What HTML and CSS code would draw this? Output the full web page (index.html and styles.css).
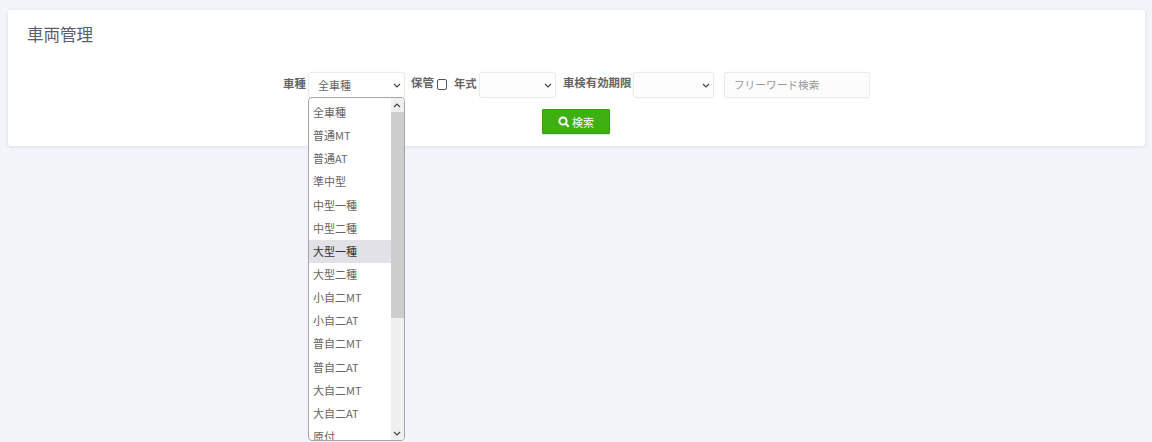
FILE: index.html
```html
<!DOCTYPE html>
<html lang="ja">
<head>
<meta charset="utf-8">
<title>車両管理</title>
<link rel="stylesheet" href="styles.css">
</head>
<body>
<main class="card">
  <h1 class="title">車両管理</h1>
  <form class="filters">
    <div class="row">
      <label class="label label-first">車種</label>
      <div class="select-wrap">
        <div class="select select-type"><span>全車種</span>
          <svg class="chev" viewBox="0 0 8 5"><path d="M1 1l3 3 3-3"/></svg>
        </div>
        <div class="menu">
          <ul class="options">
            <li>全車種</li>
            <li>普通MT</li>
            <li>普通AT</li>
            <li>準中型</li>
            <li>中型一種</li>
            <li>中型二種</li>
            <li class="active">大型一種</li>
            <li>大型二種</li>
            <li>小自二MT</li>
            <li>小自二AT</li>
            <li>普自二MT</li>
            <li>普自二AT</li>
            <li>大自二MT</li>
            <li>大自二AT</li>
            <li>原付</li>
          </ul>
          <div class="scrollbar">
            <div class="sb-btn"><svg class="sb-arrow" viewBox="0 0 8 5"><path d="M1 4l3-3 3 3"/></svg></div>
            <div class="sb-thumb"></div>
            <div class="sb-track"></div>
            <div class="sb-btn"><svg class="sb-arrow" viewBox="0 0 8 5"><path d="M1 1l3 3 3-3"/></svg></div>
          </div>
        </div>
      </div>
      <label class="label label-store">保管</label>
      <span class="check"></span>
      <label class="label label-year">年式</label>
      <div class="select select-year">
        <svg class="chev" viewBox="0 0 8 5"><path d="M1 1l3 3 3-3"/></svg>
      </div>
      <label class="label label-inspect">車検有効期限</label>
      <div class="select select-inspect">
        <svg class="chev" viewBox="0 0 8 5"><path d="M1 1l3 3 3-3"/></svg>
      </div>
      <div class="keyword">フリーワード検索</div>
    </div>
    <div class="actions">
      <button class="search" type="button">
        <svg class="search-icon" viewBox="0 0 12 12"><circle cx="5" cy="5" r="3.6"/><path d="M7.7 7.7l3.1 3.1"/></svg>
        検索
      </button>
    </div>
  </form>
</main>
</body>
</html>
```
FILE: styles.css
```css
* { box-sizing: border-box; }
html, body { height: 100%; }
body {
  margin: 0;
  padding: 10px 7px 0 8px;
  background: #f3f4f9;
  color: #666;
  font-family: "Noto Sans CJK JP", "Open Sans", sans-serif;
  font-size: 11px;
  overflow: hidden;
}
.card {
  height: 136px;
  background: #fff;
  border-radius: 3px;
  box-shadow: 0 1px 4px rgba(0, 0, 0, .09);
  padding: 14px 19px 0;
}
.title {
  margin: 0;
  font-size: 16.5px;
  font-weight: 400;
  line-height: 20px;
  color: #595d6e;
}
.filters { margin-top: 28px; }
.row {
  display: flex;
  align-items: flex-start;
  padding-left: 256px;
  height: 26px;
}
.label {
  font-size: 11.4px;
  font-weight: 700;
  line-height: 16px;
  color: #646464;
  white-space: nowrap;
}
.label-first { margin-top: 3px; margin-right: 2.2px; }
.label-store { margin: 2px 3.2px 0 6px; }
.label-year { margin: 3px 2.2px 0 7px; }
.label-inspect { margin: 2px 1.6px 0 7px; }
.select-wrap { position: relative; }
.select {
  display: flex;
  align-items: center;
  justify-content: space-between;
  height: 26px;
  padding: 0 3px 0 9px;
  background: #fff;
  border: 1px solid #ebebeb;
  border-radius: 3px;
  box-shadow: 0 0 2px rgba(0, 0, 0, .06);
  color: #666;
}
.select-type { width: 97px; }
.select-year { width: 77px; justify-content: flex-end; background: #fdfdfd; }
.select-inspect { width: 81px; justify-content: flex-end; background: #fdfdfd; }
.chev { width: 8px; height: 5px; margin-left: auto; }
.chev path, .sb-arrow path {
  fill: none;
  stroke: #444;
  stroke-width: 1.2;
}
.check {
  width: 10px;
  height: 11px;
  margin-top: 7px;
  border: 1px solid #555;
  border-radius: 2px;
  background: #fff;
}
.keyword {
  width: 146px;
  height: 26px;
  margin-left: 10px;
  padding-left: 9px;
  background: #fcfcfc;
  border: 1px solid #ebebeb;
  border-radius: 2px;
  box-shadow: 0 0 2px rgba(0, 0, 0, .05);
  font-size: 10.7px;
  line-height: 24px;
  color: #999;
}
.menu {
  position: absolute;
  top: 25px;
  left: 0;
  z-index: 2;
  display: flex;
  width: 97px;
  height: 344px;
  background: #fff;
  border: 1px solid #a4a4a4;
  border-radius: 4px;
  overflow: hidden;
}
.options {
  flex: 1;
  height: 100%;
  margin: 0;
  padding: 3px 0 0;
  list-style: none;
  overflow: hidden;
}
.options li {
  height: 23.15px;
  padding-left: 4px;
  line-height: 23px;
  color: #666;
  white-space: nowrap;
}
.options .active { background: #e1e1e7; color: #333; }
.scrollbar {
  display: flex;
  flex-direction: column;
  width: 13px;
  background: #f0f0f0;
}
.sb-btn {
  display: flex;
  align-items: center;
  justify-content: center;
  height: 14px;
  flex: none;
}
.sb-arrow { width: 8px; height: 5px; }
.sb-thumb { height: 206px; flex: none; background: #cdcdcd; }
.sb-track { flex: 1; }
.actions {
  display: flex;
  justify-content: center;
  margin-top: 11px;
  padding-right: 1px;
}
.search {
  display: flex;
  align-items: center;
  justify-content: center;
  gap: 2px;
  width: 68px;
  height: 25px;
  padding: 0;
  background: #3fb012;
  border: 1px solid #38a00f;
  border-radius: 1px;
  box-shadow: 0 1px 2px rgba(0, 0, 0, .12);
  color: #fff;
  font: inherit;
}
.search-icon { width: 12px; height: 12px; }
.search-icon circle, .search-icon path {
  fill: none;
  stroke: #fff;
  stroke-width: 2;
}
```
